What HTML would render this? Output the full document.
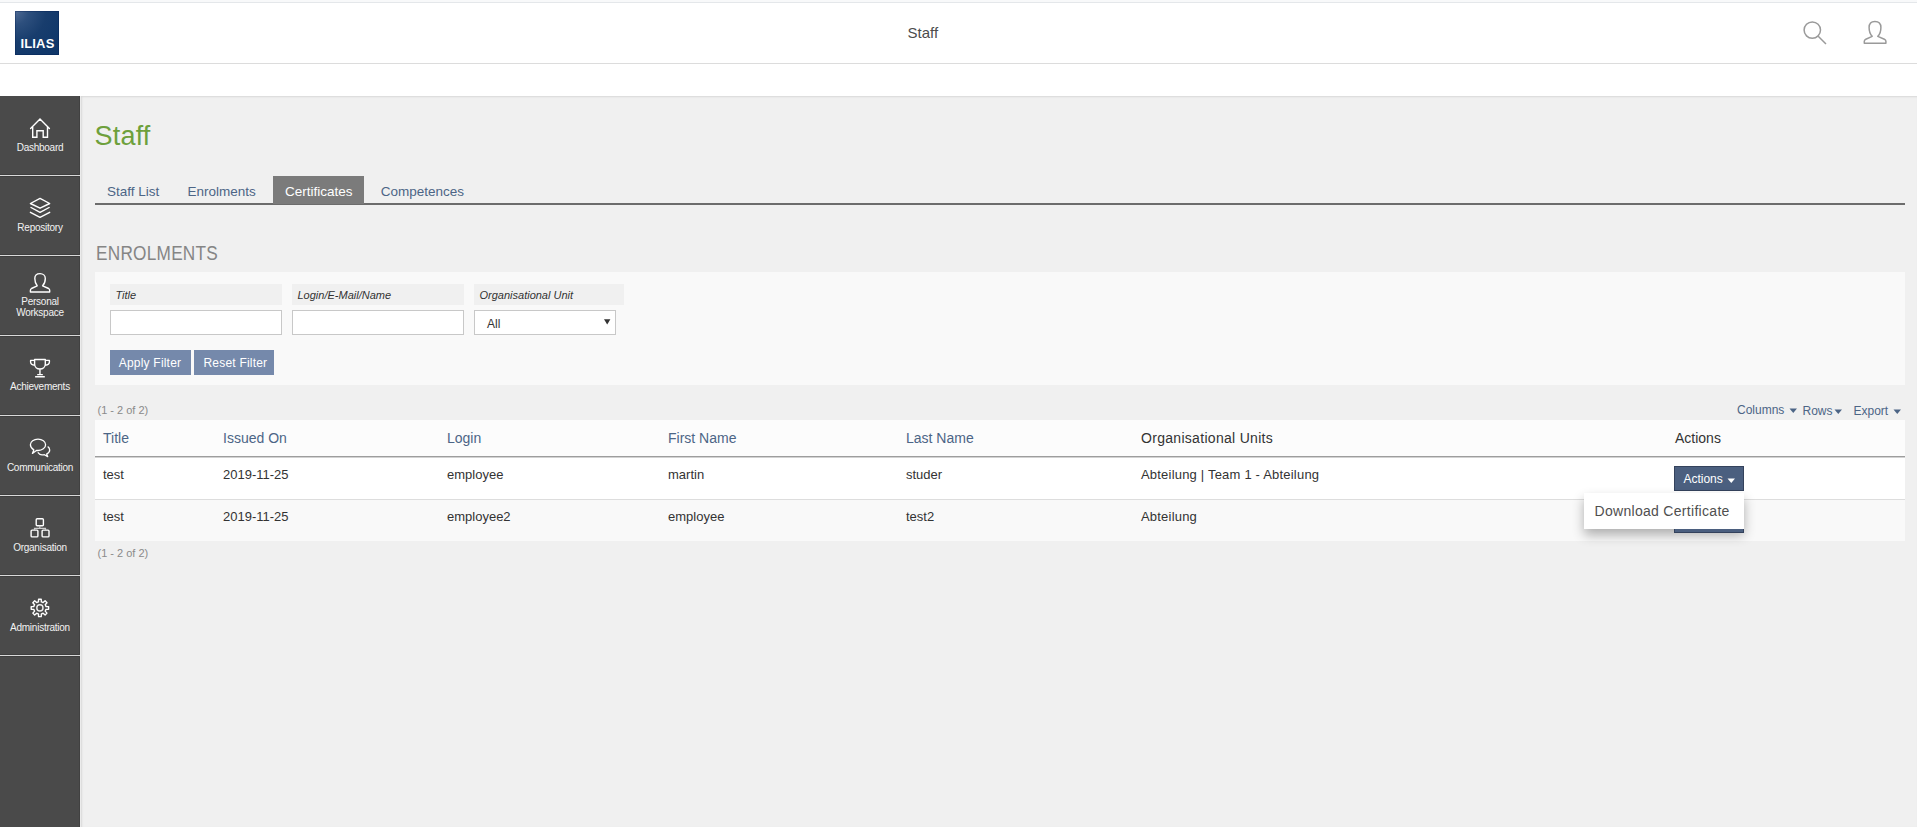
<!DOCTYPE html>
<html>
<head>
<meta charset="utf-8">
<style>
*{box-sizing:border-box;margin:0;padding:0}
html,body{width:1917px;height:827px;overflow:hidden;background:#fff;font-family:"Liberation Sans",sans-serif;color:#333}
.a{position:absolute}
.t{position:absolute;line-height:1;white-space:nowrap}
.it{font-style:italic}
</style>
</head>
<body>
<div class="a" style="left:0;top:0;width:1917px;height:2px;background:#f8f9fa"></div>
<div class="a" style="left:0;top:2px;width:1917px;height:1px;background:#e4e7ea"></div>
<div class="a" style="left:0;top:63px;width:1917px;height:1px;background:#dcdcdc"></div>
<div class="a" style="left:15px;top:11px;width:44px;height:44px;background:radial-gradient(circle at 0 0,#4f6a93 0,#2d4f7d 22%,#183d6d 50%,#11386a 80%,#10376a 100%);box-shadow:inset 0 0 0 1px rgba(0,30,80,.35)"></div>
<div class="t" style="left:20.5px;top:37.10px;font-size:13px;font-weight:bold;color:#fff;letter-spacing:0.15px">ILIAS</div>
<div class="t " style="left:907.5px;top:25.00px;font-size:15px;color:#4c4c4c;">Staff</div>

<svg class="a" style="left:1790px;top:10px" width="50" height="40" viewBox="1790 10 50 40"><circle cx="1812.3" cy="30.1" r="8.2" fill="none" stroke="#9a9a9a" stroke-width="1.5"/><path d="M1818.2,36.2 L1826,44" stroke="#9a9a9a" stroke-width="1.5" fill="none"/></svg>
<svg class="a" style="left:1850px;top:10px" width="50" height="40" viewBox="1850 10 50 40"><path d="M1872.2,36.4 C1870.3,34.5 1869.1,31.5 1869.1,27.6 C1869.1,24 1871.3,21.6 1874.9,21.6 C1878.6,21.6 1880.9,24 1880.9,27.6 C1880.9,31.5 1879.8,34.5 1877.8,36.4 L1884.4,39.2 Q1885.9,39.9 1885.9,41.3 L1885.9,43.3 L1864.3,43.3 L1864.3,41.3 Q1864.3,39.9 1865.8,39.2 Z" fill="none" stroke="#9a9a9a" stroke-width="1.5" stroke-linejoin="round"/></svg>
<div class="a" style="left:0;top:96px;width:80px;height:731px;background:#4a4a4a;box-shadow:inset -1px 0 0 #414141"></div>
<div class="a" style="left:80px;top:96px;width:1px;height:731px;background:#ebebeb"></div>
<div class="a" style="left:0;top:175px;width:80px;height:1px;background:#d9d9d9"></div>
<div class="a" style="left:0;top:174px;width:79px;height:1px;background:#3e3e3e"></div>
<div class="a" style="left:0;top:176px;width:79px;height:1px;background:#3e3e3e"></div>
<div class="a" style="left:0;top:255px;width:80px;height:1px;background:#d9d9d9"></div>
<div class="a" style="left:0;top:254px;width:79px;height:1px;background:#3e3e3e"></div>
<div class="a" style="left:0;top:256px;width:79px;height:1px;background:#3e3e3e"></div>
<div class="a" style="left:0;top:335px;width:80px;height:1px;background:#d9d9d9"></div>
<div class="a" style="left:0;top:334px;width:79px;height:1px;background:#3e3e3e"></div>
<div class="a" style="left:0;top:336px;width:79px;height:1px;background:#3e3e3e"></div>
<div class="a" style="left:0;top:415px;width:80px;height:1px;background:#d9d9d9"></div>
<div class="a" style="left:0;top:414px;width:79px;height:1px;background:#3e3e3e"></div>
<div class="a" style="left:0;top:416px;width:79px;height:1px;background:#3e3e3e"></div>
<div class="a" style="left:0;top:495px;width:80px;height:1px;background:#d9d9d9"></div>
<div class="a" style="left:0;top:494px;width:79px;height:1px;background:#3e3e3e"></div>
<div class="a" style="left:0;top:496px;width:79px;height:1px;background:#3e3e3e"></div>
<div class="a" style="left:0;top:575px;width:80px;height:1px;background:#d9d9d9"></div>
<div class="a" style="left:0;top:574px;width:79px;height:1px;background:#3e3e3e"></div>
<div class="a" style="left:0;top:576px;width:79px;height:1px;background:#3e3e3e"></div>
<div class="a" style="left:0;top:655px;width:80px;height:1px;background:#d9d9d9"></div>
<div class="a" style="left:0;top:654px;width:79px;height:1px;background:#3e3e3e"></div>
<div class="a" style="left:0;top:656px;width:79px;height:1px;background:#3e3e3e"></div>
<svg class="a" style="left:0;top:0" width="80" height="700" viewBox="0 0 80 700"><path d="M30.6,128.4 L40,118.9 L49.4,128.4 M32.7,127 V137.3 H36.9 V130.7 H43.2 V137.3 H47.5 V127" fill="none" stroke="#fff" stroke-width="1.4" stroke-linecap="round" stroke-linejoin="miter"/><path d="M40.05,198.4 L49.7,203.5 L40.05,208.2 L30.4,203.5 Z M31,207.5 L40.05,212.4 L49.1,207.5 M30.4,212.3 L40,217.3 L49.7,212.3" fill="none" stroke="#fff" stroke-width="1.4" stroke-linejoin="round" stroke-linecap="round"/><path d="M37.2,285.8 C35.7,284 34.8,281.2 34.8,278.5 C34.8,275.5 37,273.6 40,273.6 C43,273.6 45.3,275.5 45.3,278.5 C45.3,281.2 44.4,284 42.6,285.8 L48.6,288.5 Q49.7,289.1 49.7,290.4 L49.7,292 L30.4,292 L30.4,290.4 Q30.4,289.1 31.5,288.5 Z" fill="none" stroke="#fff" stroke-width="1.4" stroke-linejoin="round"/><path d="M34.6,359.5 H45.3 V364 C45.3,367 42.8,369 39.95,369 C37.1,369 34.6,367 34.6,364 Z M34.6,360.4 H30.6 V362 C30.6,363.8 32.3,365 34.8,365.2 M45.3,360.4 H49.4 V362 C49.4,363.8 47.7,365 45.2,365.2 M39.95,369 V374.5 M37.2,374.6 H42.8 M35.1,376.7 H44.8" fill="none" stroke="#fff" stroke-width="1.4" stroke-linejoin="round"/><path d="M33.8,449.9 C31.6,448.5 30.4,446.8 30.4,444.8 C30.4,441.6 33.8,439.1 38,439.1 C42.2,439.1 45.6,441.6 45.6,444.8 C45.6,448 42.2,450.5 38,450.5 C37.4,450.5 36.9,450.5 36.4,450.4 L32.4,453.4 Z M47.7,446.6 C49,447.6 49.7,448.8 49.7,450.1 C49.7,451.8 48.5,453.2 46.6,454.1 L47.7,456.6 L44.4,454.7 C43.7,454.85 42.9,454.9 42,454.9 C40.3,454.9 38.9,453.9 37.8,452.4" fill="none" stroke="#fff" stroke-width="1.3" stroke-linejoin="round"/><rect x="36.2" y="518.8" width="7.2" height="6.9" rx="1" fill="none" stroke="#fff" stroke-width="1.4"/><rect x="31.1" y="530.1" width="6.8" height="6.8" rx="1" fill="none" stroke="#fff" stroke-width="1.4"/><rect x="42.1" y="530.1" width="6.9" height="6.8" rx="1" fill="none" stroke="#fff" stroke-width="1.4"/><path d="M34.5,530.1 V528.4 H45.5 V530.1 M39.8,525.7 V528.4" fill="none" stroke="#ccc" stroke-width="1.2"/><g transform="translate(39.9,607.9)"><path d="M-1.47,-6.02 L-1.32,-8.70 L1.32,-8.70 L1.47,-6.02 A6.2,6.2 0 0 1 3.22,-5.30 L5.22,-7.08 L7.08,-5.22 L5.30,-3.22 A6.2,6.2 0 0 1 6.02,-1.47 L8.70,-1.32 L8.70,1.32 L6.02,1.47 A6.2,6.2 0 0 1 5.30,3.22 L7.08,5.22 L5.22,7.08 L3.22,5.30 A6.2,6.2 0 0 1 1.47,6.02 L1.32,8.70 L-1.32,8.70 L-1.47,6.02 A6.2,6.2 0 0 1 -3.22,5.30 L-5.22,7.08 L-7.08,5.22 L-5.30,3.22 A6.2,6.2 0 0 1 -6.02,1.47 L-8.70,1.32 L-8.70,-1.32 L-6.02,-1.47 A6.2,6.2 0 0 1 -5.30,-3.22 L-7.08,-5.22 L-5.22,-7.08 L-3.22,-5.30 A6.2,6.2 0 0 1 -1.47,-6.02 Z" fill="none" stroke="#fff" stroke-width="1.4" stroke-linejoin="round"/><circle cx="0" cy="0" r="3.1" fill="none" stroke="#eee" stroke-width="1.4"/></g></svg>
<div class="t" style="left:0;width:80px;text-align:center;top:142.73px;font-size:10px;color:#f2f2f2;letter-spacing:-0.25px">Dashboard</div>
<div class="t" style="left:0;width:80px;text-align:center;top:222.94px;font-size:10px;color:#f2f2f2;letter-spacing:-0.25px">Repository</div>
<div class="t" style="left:0;width:80px;text-align:center;top:297.34px;font-size:10px;color:#f2f2f2;letter-spacing:-0.25px">Personal</div>
<div class="t" style="left:0;width:80px;text-align:center;top:307.54px;font-size:10px;color:#f2f2f2;letter-spacing:-0.25px">Workspace</div>
<div class="t" style="left:0;width:80px;text-align:center;top:382.34px;font-size:10px;color:#f2f2f2;letter-spacing:-0.25px">Achievements</div>
<div class="t" style="left:0;width:80px;text-align:center;top:462.74px;font-size:10px;color:#f2f2f2;letter-spacing:-0.25px">Communication</div>
<div class="t" style="left:0;width:80px;text-align:center;top:542.93px;font-size:10px;color:#f2f2f2;letter-spacing:-0.25px">Organisation</div>
<div class="t" style="left:0;width:80px;text-align:center;top:622.74px;font-size:10px;color:#f2f2f2;letter-spacing:-0.25px">Administration</div>
<div class="a" style="left:81px;top:96px;width:1836px;height:731px;background:#f0f0f0;box-shadow:inset 1px 1px 2px rgba(0,0,0,.1)"></div>
<div class="t " style="left:94.5px;top:122.54px;font-size:27px;color:#6ea03c;letter-spacing:0.2px">Staff</div>

<div class="a" style="left:95px;top:203px;width:1810px;height:2px;background:#6c6c6c"></div>
<div class="a" style="left:273px;top:176px;width:91px;height:28px;background:#7b7b7b"></div>
<div class="t " style="left:107px;top:185.27px;font-size:13.5px;color:#4c6586;">Staff List</div>

<div class="t " style="left:187.5px;top:185.27px;font-size:13.5px;color:#4c6586;">Enrolments</div>

<div class="t " style="left:285px;top:185.27px;font-size:13.5px;color:#ffffff;">Certificates</div>

<div class="t " style="left:380.7px;top:185.27px;font-size:13.5px;color:#4c6586;">Competences</div>

<div class="t " style="left:96.2px;top:242.97px;font-size:20px;color:#858585;letter-spacing:0.3px;transform:scaleX(0.86);transform-origin:0 0">ENROLMENTS</div>

<div class="a" style="left:95px;top:272px;width:1810px;height:113px;background:#f9f9f9"></div>
<div class="a" style="left:110px;top:284px;width:172px;height:21px;background:#f0f0f0"></div>
<div class="t it" style="left:115.5px;top:290.29px;font-size:11px;color:#333;">Title</div>

<div class="a" style="left:292px;top:284px;width:172px;height:21px;background:#f0f0f0"></div>
<div class="t it" style="left:297.5px;top:290.29px;font-size:11px;color:#333;">Login/E-Mail/Name</div>

<div class="a" style="left:474px;top:284px;width:150px;height:21px;background:#f0f0f0"></div>
<div class="t it" style="left:479.5px;top:290.29px;font-size:11px;color:#333;">Organisational Unit</div>

<div class="a" style="left:110px;top:310px;width:172px;height:25px;background:#fff;border:1px solid #c8c8c8"></div>
<div class="a" style="left:292px;top:310px;width:172px;height:25px;background:#fff;border:1px solid #c8c8c8"></div>
<div class="a" style="left:474px;top:310px;width:142px;height:25px;background:#fff;border:1px solid #c8c8c8"></div>
<div class="t " style="left:487px;top:317.64px;font-size:12px;color:#333;">All</div>

<svg class="a" style="left:600px;top:316px" width="14" height="12" viewBox="600 316 14 12"><path d="M604,319.3 L610.4,319.3 L607.2,324.6 Z" fill="#333"/></svg>
<div class="a" style="left:110px;top:350px;width:81px;height:25px;background:#7589ab"></div>
<div class="a" style="left:194px;top:350px;width:80px;height:25px;background:#7589ab"></div>
<div class="t " style="left:118.8px;top:356.84px;font-size:12px;color:#fff;letter-spacing:0.2px">Apply Filter</div>

<div class="t " style="left:203.5px;top:356.84px;font-size:12px;color:#fff;letter-spacing:0.2px">Reset Filter</div>

<div class="t " style="left:97.5px;top:404.89px;font-size:11px;color:#8a8a8a;">(1 - 2 of 2)</div>

<div class="t " style="left:1737px;top:403.74px;font-size:12px;color:#4c6586;">Columns</div>

<svg class="a" style="left:1789px;top:408px" width="9" height="6" viewBox="0 0 9 6"><path d="M0.5,0.5 L8,0.5 L4.25,5 Z" fill="#4c6586"/></svg>
<div class="t " style="left:1802.5px;top:405.04px;font-size:12px;color:#4c6586;">Rows</div>

<svg class="a" style="left:1834px;top:408.5px" width="9" height="6" viewBox="0 0 9 6"><path d="M0.5,0.5 L8,0.5 L4.25,5 Z" fill="#4c6586"/></svg>
<div class="t " style="left:1853.5px;top:405.04px;font-size:12px;color:#4c6586;">Export</div>

<svg class="a" style="left:1893px;top:408.5px" width="9" height="6" viewBox="0 0 9 6"><path d="M0.5,0.5 L8,0.5 L4.25,5 Z" fill="#4c6586"/></svg>
<div class="a" style="left:95px;top:420px;width:1810px;height:36px;background:#fcfcfc"></div>
<div class="a" style="left:95px;top:456px;width:1810px;height:1px;background:#9d9d9d"></div>
<div class="a" style="left:95px;top:457px;width:1810px;height:1px;background:#d2d2d2"></div>
<div class="a" style="left:95px;top:458px;width:1810px;height:41px;background:#fff"></div>
<div class="a" style="left:95px;top:499px;width:1810px;height:1px;background:#dddddd"></div>
<div class="a" style="left:95px;top:500px;width:1810px;height:41px;background:#f9f9f9"></div>
<div class="t " style="left:103px;top:431.05px;font-size:14px;color:#4c6586;">Title</div>

<div class="t " style="left:223px;top:431.05px;font-size:14px;color:#4c6586;">Issued On</div>

<div class="t " style="left:447px;top:431.05px;font-size:14px;color:#4c6586;">Login</div>

<div class="t " style="left:668px;top:431.05px;font-size:14px;color:#4c6586;">First Name</div>

<div class="t " style="left:906px;top:431.05px;font-size:14px;color:#4c6586;">Last Name</div>

<div class="t " style="left:1141px;top:431.05px;font-size:14px;color:#333;letter-spacing:0.3px">Organisational Units</div>

<div class="t " style="left:1675px;top:431.05px;font-size:14px;color:#333;">Actions</div>

<div class="t " style="left:103px;top:468.00px;font-size:13px;color:#333;">test</div>

<div class="t " style="left:223px;top:468.00px;font-size:13px;color:#333;">2019-11-25</div>

<div class="t " style="left:447px;top:468.00px;font-size:13px;color:#333;">employee</div>

<div class="t " style="left:668px;top:468.00px;font-size:13px;color:#333;">martin</div>

<div class="t " style="left:906px;top:468.00px;font-size:13px;color:#333;">studer</div>

<div class="t " style="left:1141px;top:468.00px;font-size:13px;color:#333;letter-spacing:0.2px">Abteilung | Team 1 - Abteilung</div>

<div class="t " style="left:103px;top:510.00px;font-size:13px;color:#333;">test</div>

<div class="t " style="left:223px;top:510.00px;font-size:13px;color:#333;">2019-11-25</div>

<div class="t " style="left:447px;top:510.00px;font-size:13px;color:#333;">employee2</div>

<div class="t " style="left:668px;top:510.00px;font-size:13px;color:#333;">employee</div>

<div class="t " style="left:906px;top:510.00px;font-size:13px;color:#333;">test2</div>

<div class="t " style="left:1141px;top:510.00px;font-size:13px;color:#333;letter-spacing:0.2px">Abteilung</div>

<div class="a" style="left:1674px;top:466px;width:70px;height:25px;background:#4b5f7f;border:1px solid #34425c"></div>
<div class="t " style="left:1683.4px;top:472.94px;font-size:12px;color:#fff;">Actions</div>

<svg class="a" style="left:1727px;top:477.5px" width="9" height="6" viewBox="0 0 9 6"><path d="M0.5,0.5 L8,0.5 L4.25,5 Z" fill="#fff"/></svg>
<div class="a" style="left:1674px;top:508px;width:70px;height:25px;background:#4b5f7f;border:1px solid #34425c"></div>
<div class="a" style="left:1584px;top:493px;width:160px;height:36px;background:#fff;box-shadow:0 6px 12px rgba(0,0,0,.3)"></div>
<div class="t " style="left:1594.5px;top:503.85px;font-size:14px;color:#4f4f4f;letter-spacing:0.3px">Download Certificate</div>

<div class="a" style="left:1674px;top:529px;width:70px;height:4px;background:#4b5f7f;border:1px solid #34425c;border-top:0"></div>
<div class="t " style="left:97.5px;top:548.39px;font-size:11px;color:#8a8a8a;">(1 - 2 of 2)</div>

</body>
</html>
